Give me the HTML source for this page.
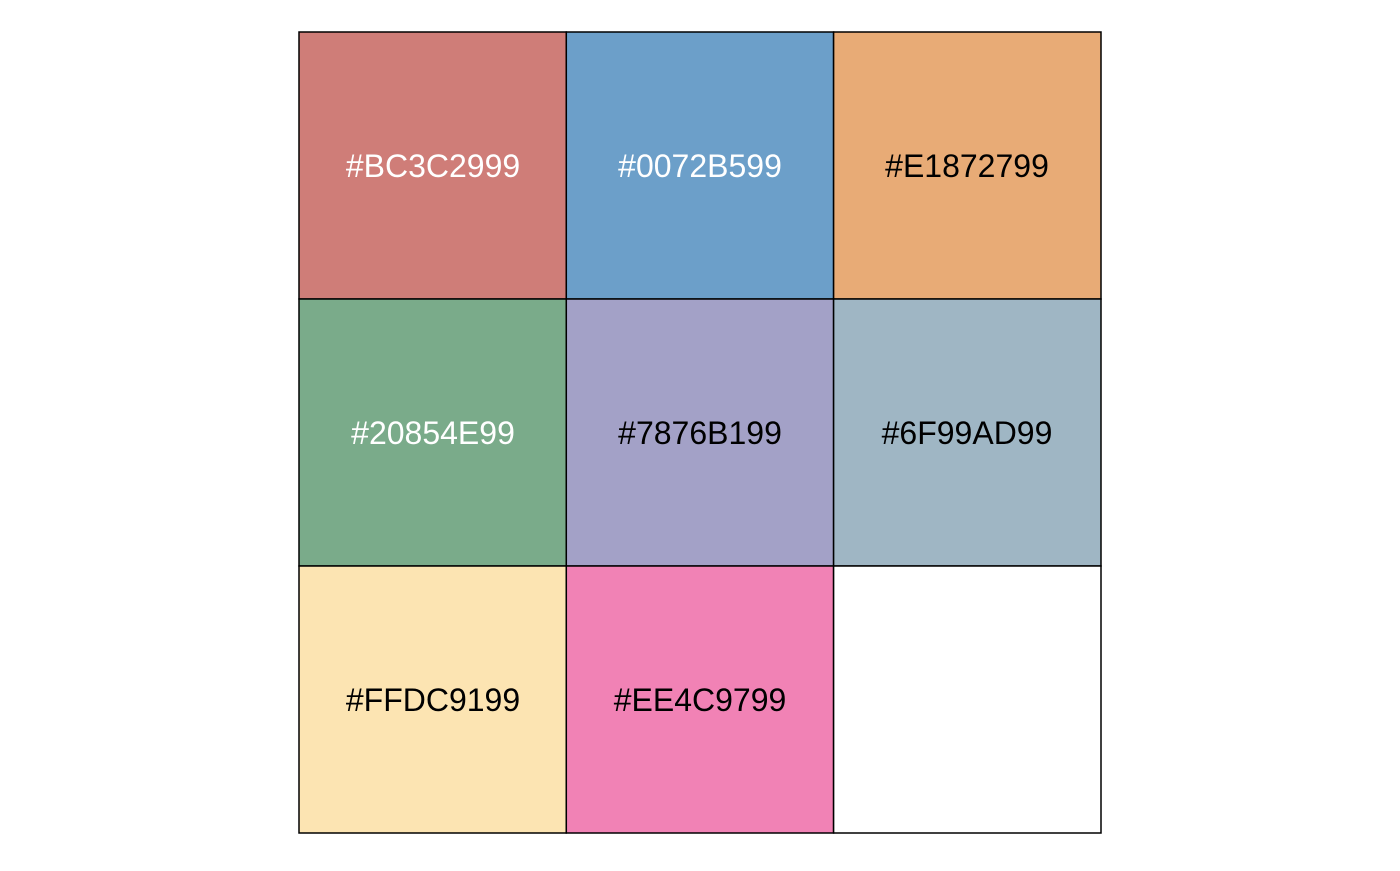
<!DOCTYPE html>
<html><head><style>html,body{margin:0;padding:0;background:#fff;}</style></head>
<body>
<svg width="1400" height="866" xmlns="http://www.w3.org/2000/svg" font-family="Liberation Sans, Arial, sans-serif" font-size="32" text-anchor="middle">
<rect width="1400" height="866" fill="#fff"/>
<g stroke="#000" stroke-width="1.5">
<rect x="299" y="32" width="267.3" height="267" fill="#CF7D78"/>
<rect x="566.3" y="32" width="267.3" height="267" fill="#6C9FC9"/>
<rect x="833.6" y="32" width="267.4" height="267" fill="#E8AB76"/>
<rect x="299" y="299" width="267.3" height="267" fill="#7AAB8A"/>
<rect x="566.3" y="299" width="267.3" height="267" fill="#A3A1C7"/>
<rect x="833.6" y="299" width="267.4" height="267" fill="#9FB6C4"/>
<rect x="299" y="566" width="267.3" height="267" fill="#FCE4B2"/>
<rect x="566.3" y="566" width="267.3" height="267" fill="#F182B5"/>
<rect x="833.6" y="566" width="267.4" height="267" fill="#fff"/>
</g>
<g dominant-baseline="central">
<text x="433" y="166" fill="#fff">#BC3C2999</text>
<text x="700" y="166" fill="#fff">#0072B599</text>
<text x="967" y="166" fill="#000">#E1872799</text>
<text x="433" y="433" fill="#fff">#20854E99</text>
<text x="700" y="433" fill="#000">#7876B199</text>
<text x="967" y="433" fill="#000">#6F99AD99</text>
<text x="433" y="700" fill="#000">#FFDC9199</text>
<text x="700" y="700" fill="#000">#EE4C9799</text>
</g>
</svg>
</body></html>
